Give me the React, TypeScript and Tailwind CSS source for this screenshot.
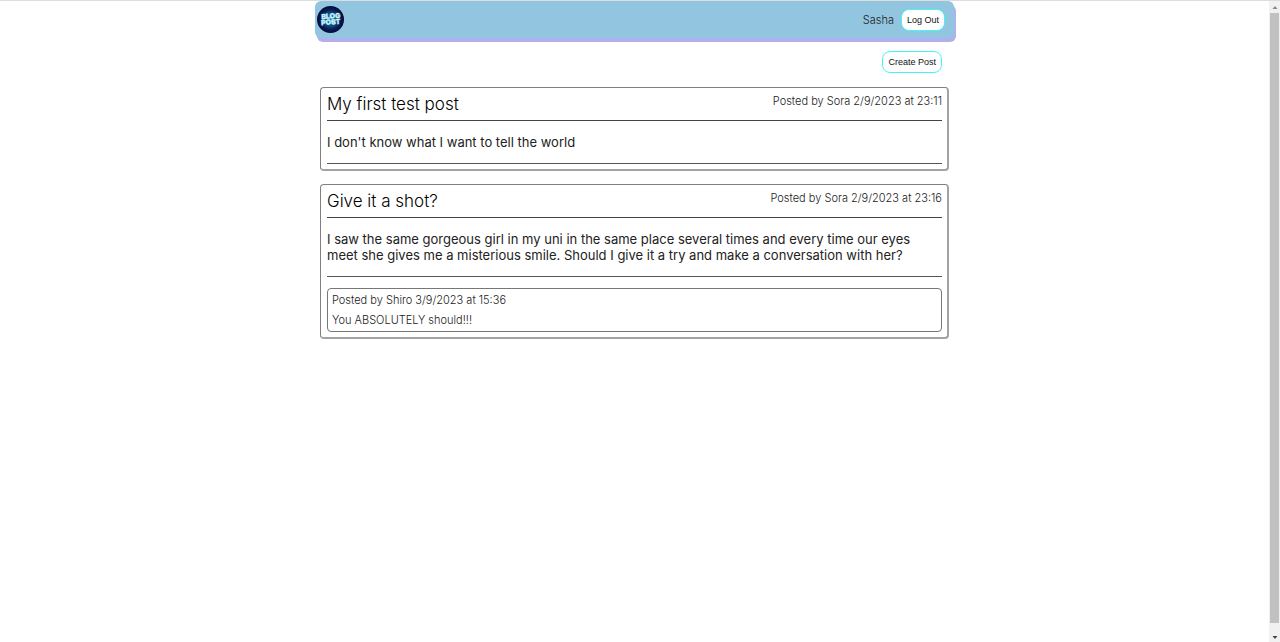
import type { ReactNode } from "react";

type Comment = { author: string; date: string; text: string };
type Post = { title: string; author: string; date: string; body: string; comments: Comment[] };

const posts: Post[] = [
  {
    title: "My first test post",
    author: "Sora",
    date: "2/9/2023 at 23:11",
    body: "I don't know what I want to tell the world",
    comments: [],
  },
  {
    title: "Give it a shot?",
    author: "Sora",
    date: "2/9/2023 at 23:16",
    body: "I saw the same gorgeous girl in my uni in the same place several times and every time our eyes meet she gives me a misterious smile. Should I give it a try and make a conversation with her?",
    comments: [{ author: "Shiro", date: "3/9/2023 at 15:36", text: "You ABSOLUTELY should!!!" }],
  },
];

function Logo() {
  return (
    <svg viewBox="0 0 54 54" className="size-[27px]" role="img" aria-label="Blog Post">
      <defs>
        <radialGradient id="logo-glow">
          <stop offset="0" stopColor="#178ab8" />
          <stop offset="0.45" stopColor="#0e5288" />
          <stop offset="0.75" stopColor="#081b52" />
          <stop offset="1" stopColor="#050b36" />
        </radialGradient>
      </defs>
      <circle cx="27" cy="27" r="27" fill="url(#logo-glow)" />
      <g
        fill="#f0fcff"
        stroke="#a5e8f8"
        strokeWidth="0.8"
        fontFamily="Inter, sans-serif"
        fontWeight="800"
        fontSize="14"
        textAnchor="middle"
        transform="rotate(-4 27 27)"
      >
        <text x="28" y="25">BLOG</text>
        <text x="27" y="37">POST</text>
      </g>
    </svg>
  );
}

function PillButton({ children }: { children: ReactNode }) {
  return (
    <button
      type="button"
      className="h-[22px] rounded-lg border border-[#45f3f8] bg-white px-[5px] font-['Liberation_Sans',sans-serif] text-[9px] leading-3 text-[#111]"
    >
      {children}
    </button>
  );
}

function PostCard({ post }: { post: Post }) {
  return (
    <article className="rounded border border-r-2 border-b-2 border-[#808080] border-r-[#a3a3a3] border-b-[#a3a3a3] pt-1 pr-[5px] pb-[5px] pl-[6px]">
      <header className="flex items-start justify-between border-b border-[#444] pb-1">
        <h2 className="text-[17px] leading-6 font-[350] text-black">{post.title}</h2>
        <p className="pt-px text-[11px] leading-4 font-[350] text-[#222]">
          Posted by {post.author} {post.date}
        </p>
      </header>
      <p className="border-b border-[#555] py-[13px] text-[13px] leading-4 text-[#222]">{post.body}</p>
      {post.comments.map((comment) => (
        <section
          key={comment.date}
          className="mt-[11px] rounded border border-[#777] px-1 py-[3px] text-[11px] font-[350] text-[#222]"
        >
          <p className="leading-4">
            Posted by {comment.author} {comment.date}
          </p>
          <p className="mt-1 leading-4">{comment.text}</p>
        </section>
      ))}
    </article>
  );
}

function ScrollRail() {
  return (
    <div aria-hidden="true" className="sticky top-0 flex h-screen w-[11px] shrink-0 flex-col items-center bg-[#f1f1f1]">
      <svg viewBox="0 0 10 12" className="h-3 w-[10px]">
        <path d="M5 5 L7.5 8 H2.5 Z" fill="#888" />
      </svg>
      <div className="mb-2 w-[9px] flex-1 bg-[#c1c1c1]" />
      <svg viewBox="0 0 10 12" className="h-3 w-[10px]">
        <path d="M5 8 L7.5 5 H2.5 Z" fill="#444" />
      </svg>
    </div>
  );
}

export default function App() {
  return (
    <div className="flex min-h-screen border-t border-[#ddd] bg-white font-['Inter',sans-serif]">
      <div className="min-w-0 flex-1">
        <div className="mx-auto max-w-[639px]">
          <header className="flex items-center justify-between rounded-md bg-[#92c5df] py-[5px] pr-[9px] pl-[2px] shadow-[2px_4px_0_#b2b0ec]">
            <a href="#home">
              <Logo />
            </a>
            <div className="flex items-center gap-[7px]">
              <span className="text-[11px] leading-4 font-[350] text-[#222]">Sasha</span>
              <PillButton>Log Out</PillButton>
            </div>
          </header>
          <div className="flex justify-end pt-[13px] pr-3">
            <PillButton>Create Post</PillButton>
          </div>
          <main className="flex flex-col gap-[13px] px-[5px] pt-[14px]">
            {posts.map((post) => (
              <PostCard key={post.title} post={post} />
            ))}
          </main>
        </div>
      </div>
      <ScrollRail />
    </div>
  );
}
